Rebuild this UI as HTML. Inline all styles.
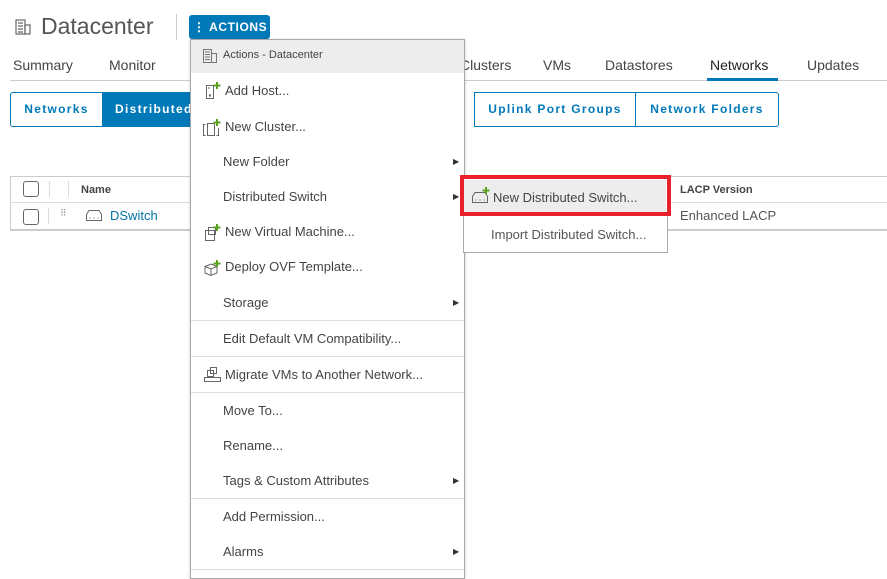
<!DOCTYPE html>
<html><head><meta charset="utf-8"><style>
*{margin:0;padding:0;box-sizing:border-box}
body{width:887px;height:572px;overflow:hidden;background:#fff;font-family:"Liberation Sans",sans-serif;color:#333;position:relative}
.a{position:absolute;white-space:nowrap}
.tab{font-size:14px;top:57px;color:#444}
.btn{position:absolute;top:92px;height:35px;border:1px solid #0079b8;color:#0079b8;font-size:12px;letter-spacing:1.3px;font-weight:bold;line-height:33px;text-align:center}
.menu{position:absolute;left:190px;top:39px;width:275px;height:540px;background:#fff;border:1px solid #aaa;box-shadow:0 1px 3px rgba(0,0,0,.2)}
.mi{position:absolute;left:32px;font-size:13px;color:#444}
.arr{position:absolute;left:262px;font-size:8px;color:#333}
.sep{position:absolute;left:0;width:273px;height:1px;background:#ddd}
.cb{position:absolute;width:16px;height:16px;border:1px solid #666;border-radius:3px;background:#fff}
</style></head><body>
<svg class="a" style="left:14px;top:18px" width="18" height="18" viewBox="0 0 18 18" fill="none" stroke="#666" stroke-width="1.2"><rect x="2" y="2" width="9" height="14"/><rect x="11" y="7" width="5" height="9"/><path d="M4 5h5M4 8h5M4 11h5M4 14h5"/></svg>
<div class="a" style="left:41px;top:13px;font-size:23px;color:#555">Datacenter</div>
<div class="a" style="left:176px;top:14px;width:1px;height:26px;background:#ccc"></div>
<div class="a" style="left:189px;top:15px;width:81px;height:24px;background:#0079b8;border-radius:3px;color:#fff;font-size:12px;font-weight:bold;letter-spacing:.6px;line-height:24px;padding-left:4px">⋮ ACTIONS</div>
<div class="a tab" style="left:13px">Summary</div>
<div class="a tab" style="left:109px">Monitor</div>
<div class="a tab" style="left:460px">Clusters</div>
<div class="a tab" style="left:543px">VMs</div>
<div class="a tab" style="left:605px">Datastores</div>
<div class="a tab" style="left:710px;color:#222">Networks</div>
<div class="a tab" style="left:807px">Updates</div>
<div class="a" style="left:10px;top:80px;width:877px;height:1px;background:#ccc"></div>
<div class="a" style="left:707px;top:78px;width:71px;height:3px;background:#0079b8"></div>
<div class="btn" style="left:10px;width:93px;border-radius:3px 0 0 3px">Networks</div>
<div class="btn" style="left:102px;width:120px;background:#0079b8;color:#fff;text-align:left;padding-left:12px">Distributed</div>
<div class="btn" style="left:474px;width:162px">Uplink Port Groups</div>
<div class="btn" style="left:635px;width:144px;border-radius:0 3px 3px 0">Network Folders</div>
<div class="a" style="left:10px;top:176px;width:877px;height:55px;border:1px solid #ccc;border-right:none;border-bottom:2px solid #ccc"></div>
<div class="a" style="left:10px;top:202px;width:877px;height:1px;background:#ddd"></div>
<div class="cb" style="left:23px;top:181px"></div>
<div class="cb" style="left:23px;top:209px"></div>
<div class="a" style="left:49px;top:181px;width:1px;height:16px;background:#ddd"></div>
<div class="a" style="left:68px;top:181px;width:1px;height:16px;background:#ddd"></div>
<div class="a" style="left:48px;top:208px;width:1px;height:16px;background:#ddd"></div>
<div class="a" style="left:60px;top:208px;font-size:9px;color:#999">⠿</div>
<div class="a" style="left:81px;top:184px;font-size:11px;font-weight:bold;color:#444">Name</div>
<svg class="a" style="left:85px;top:209px" width="18" height="13" viewBox="0 0 18 13" fill="none" stroke="#666"><path d="M1.5 11.5V5.5L4 1.5h10l2.5 4v6z"/><path d="M4.5 9h1M8.5 9h1M12.5 9h1"/></svg>
<div class="a" style="left:110px;top:208px;font-size:13px;color:#0072a3">DSwitch</div>
<div class="a" style="left:680px;top:184px;font-size:11px;font-weight:bold;color:#444">LACP Version</div>
<div class="a" style="left:680px;top:208px;font-size:13px;color:#555">Enhanced LACP</div>

<div class="menu">
<div class="a" style="left:0;top:0;width:273px;height:33px;background:#ededed"></div>
<svg class="a" style="left:11px;top:8px" width="16" height="16" viewBox="0 0 16 16" fill="none" stroke="#777"><rect x="1.5" y="1.5" width="8" height="13"/><rect x="9.5" y="5.5" width="5" height="9"/><path d="M3 4h5M3 6.5h5M3 9h5M3 11.5h5"/></svg>
<div class="mi" style="top:9px;font-size:11px">Actions - Datacenter</div>
<div class="mi" style="top:43px;left:34px">Add Host...</div>
<div class="mi" style="top:79px;left:34px">New Cluster...</div>
<div class="mi" style="top:114px">New Folder</div><div class="arr" style="top:117px">▶</div>
<div class="mi" style="top:149px">Distributed Switch</div><div class="arr" style="top:152px">▶</div>
<div class="mi" style="top:184px;left:34px">New Virtual Machine...</div>
<div class="mi" style="top:219px;left:34px">Deploy OVF Template...</div>
<div class="mi" style="top:255px">Storage</div><div class="arr" style="top:258px">▶</div>
<div class="sep" style="top:280px"></div>
<div class="mi" style="top:291px">Edit Default VM Compatibility...</div>
<div class="sep" style="top:316px"></div>
<div class="mi" style="top:327px;left:34px">Migrate VMs to Another Network...</div>
<div class="sep" style="top:352px"></div>
<div class="mi" style="top:363px">Move To...</div>
<div class="mi" style="top:398px">Rename...</div>
<div class="mi" style="top:433px">Tags &amp; Custom Attributes</div><div class="arr" style="top:436px">▶</div>
<div class="sep" style="top:458px"></div>
<div class="mi" style="top:469px">Add Permission...</div>
<div class="mi" style="top:504px">Alarms</div><div class="arr" style="top:507px">▶</div>
<div class="sep" style="top:529px"></div>
<svg class="a" style="left:13px;top:41px" width="18" height="19" viewBox="0 0 18 19" fill="none" stroke="#666"><rect x="2.5" y="4.5" width="7" height="13"/><circle cx="6" cy="14.5" r=".7"/><path d="M4 7h2"/><path d="M13 1v7M9.5 4.5h7" stroke="#5aa220" stroke-width="2"/></svg>
<svg class="a" style="left:11px;top:78px" width="20" height="19" viewBox="0 0 20 19" fill="none" stroke="#666"><path d="M3.5 6.5H1.5v11h2M16.5 10v7.5h-2"/><rect x="5.5" y="5.5" width="7" height="12"/><path d="M15 1v7M11.5 4.5h7" stroke="#5aa220" stroke-width="2"/></svg>
<svg class="a" style="left:13px;top:183px" width="18" height="19" viewBox="0 0 18 19" fill="none" stroke="#666"><rect x="1.5" y="7.5" width="9" height="10"/><rect x="4.5" y="4.5" width="7" height="7"/><path d="M13 1v7M9.5 4.5h7" stroke="#5aa220" stroke-width="2"/></svg>
<svg class="a" style="left:13px;top:219px" width="18" height="18" viewBox="0 0 18 18" fill="none" stroke="#666"><path d="M7 5l6 2.5v6.5l-6 2.5-6-2.5V7.5z"/><path d="M1 7.5l6 2.5 6-2.5M7 10v6.5"/><path d="M13 1v7M9.5 4.5h7" stroke="#5aa220" stroke-width="2"/></svg>
<svg class="a" style="left:12px;top:325px" width="20" height="18" viewBox="0 0 20 18" fill="none" stroke="#666"><rect x="1.5" y="12.5" width="16" height="4"/><rect x="7.5" y="2.5" width="6" height="6"/><rect x="4.5" y="5.5" width="6" height="6"/><path d="M10 11.5v1"/></svg>
</div>

<div class="a" style="left:463px;top:176px;width:205px;height:77px;background:#fff;border:1px solid #aaa"></div>
<div class="a" style="left:464px;top:180px;width:202px;height:34px;background:#ededed"></div>
<svg class="a" style="left:471px;top:186px" width="20" height="18" viewBox="0 0 20 18" fill="none" stroke="#666"><path d="M1.5 16.5V10.5L4 6.5h10l2.5 4v6z"/><path d="M4.5 14h1M8.5 14h1M12.5 14h1"/><path d="M15 1v7M11.5 4.5h7" stroke="#5aa220" stroke-width="2"/></svg>
<div class="a" style="left:493px;top:190px;font-size:13px;color:#444">New Distributed Switch...</div>
<div class="a" style="left:491px;top:227px;font-size:13px;color:#555">Import Distributed Switch...</div>
<div class="a" style="left:460px;top:175px;width:211px;height:41px;border:4px solid #e8202a"></div>
</body></html>
